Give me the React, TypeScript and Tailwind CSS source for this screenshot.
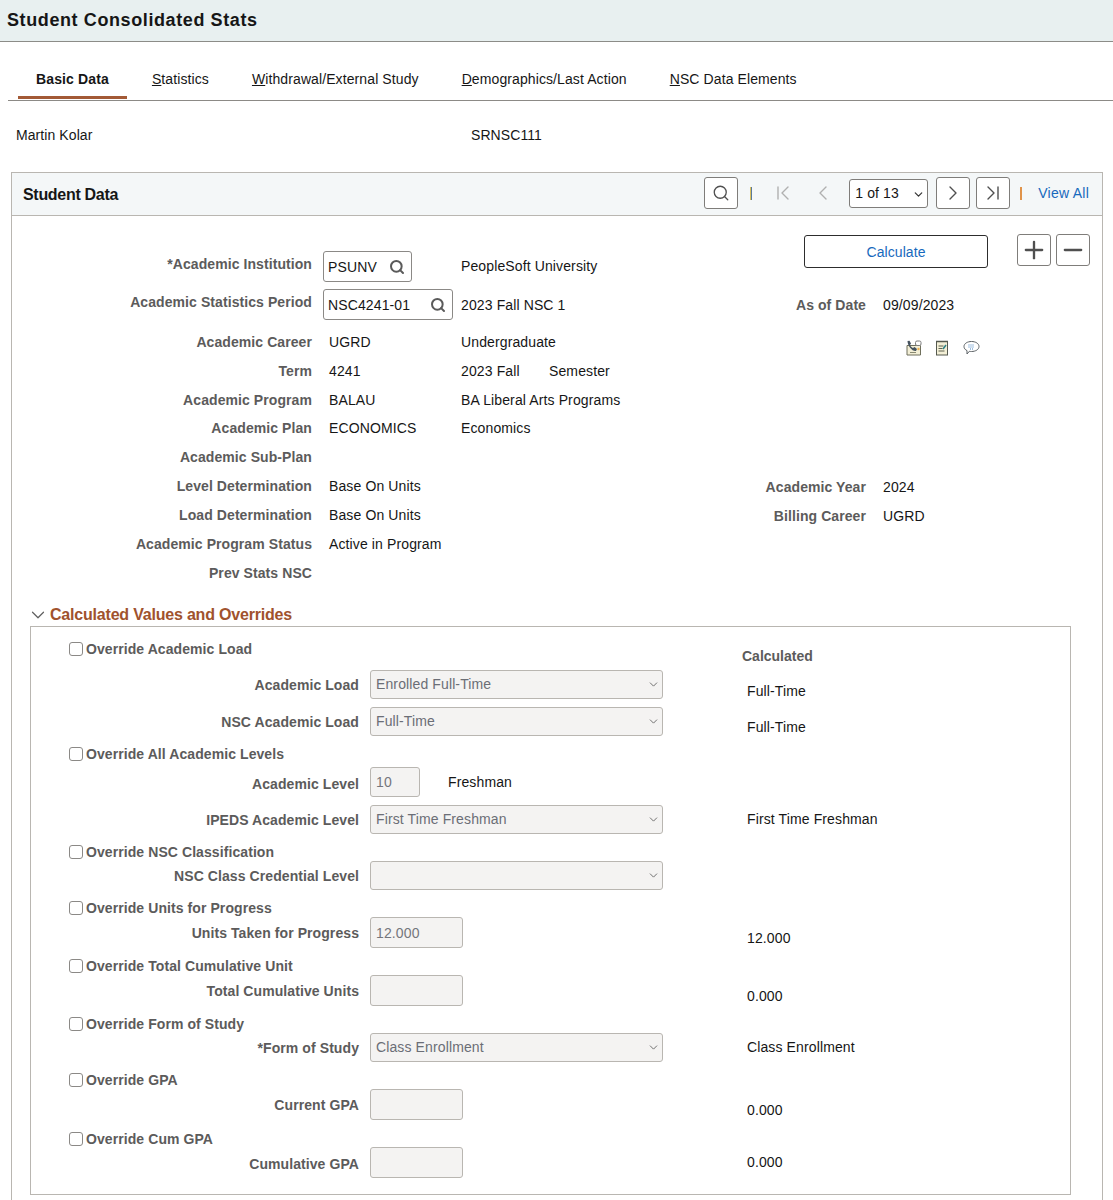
import React from 'react'
import { ChevronDown, ChevronLeft, ChevronRight, ChevronFirst, ChevronLast, Search, Plus, Minus } from 'lucide-react'

const labelCls = 'text-[14px] leading-4 font-bold text-[#5c5b5b] tracking-[0.08px] text-right whitespace-nowrap'
const valueCls = 'text-[14px] leading-4 text-[#161616] tracking-[0.12px]'
const tabCls = 'flex h-[40px] items-center px-[18px] text-[14px] text-[#161616] tracking-[0.1px]'

function NotifyIcon() {
  return (
    <svg width="16" height="16" viewBox="0 0 16 16">
      <path d="M1 5.5h13.5V15H1z" fill="#f3efd6" stroke="#6f6f5c" />
      <path d="M1.5 1 L3.5 .8 L5 3.5 L4 5 C4.6 6.6 5.6 7.4 7 8 L8.6 7 L11 9 L10 11 C6 11.4 1.6 6 1.5 1z" fill="#46535f" />
      <rect x="9.5" y="1" width="5.5" height="4.5" rx="1.5" fill="#fff" stroke="#7d7d7d" />
      <path d="M4 12.5h6" stroke="#8a8a72" />
      <circle cx="12.5" cy="9" r="1.2" fill="#f0b050" />
    </svg>
  )
}

function NotepadIcon() {
  return (
    <svg width="14" height="16" viewBox="0 0 14 16">
      <rect x="1.5" y="1.5" width="11" height="13.5" fill="#f3efd6" stroke="#55594f" />
      <path d="M1.5 1.5h11" stroke="#55594f" strokeWidth="2" strokeDasharray="1 1" />
      <path d="M3.5 6h5M3.5 8.5h4M3.5 11h6" stroke="#5f6350" />
      <path d="M8 9l3-4" stroke="#2f7f86" strokeWidth="1.6" />
    </svg>
  )
}

function ChatIcon() {
  return (
    <svg width="17" height="16" viewBox="0 0 17 16">
      <path d="M8.5 1.5c4 0 7.5 2 7.5 5s-3.500 5-7.500 5c-.8 0-1.500 0-2.200-.2L4 14v-3.400C2 9.700 1 8.200 1 6.500c0-3 3.500-5 7.500-5z" fill="#fff" stroke="#5a6064" />
      <path d="M5.500 5h6M5.500 7h6M7 9h3" stroke="#3f7fc0" strokeDasharray="1 1" />
    </svg>
  )
}

function IconBtn({ children, className }: { children: React.ReactNode; className: string }) {
  return (
    <button className={`flex items-center justify-center rounded-[3px] border border-[#7f7d7a] bg-white text-[#4f4f4f] ${className}`}>
      {children}
    </button>
  )
}

function PromptInput({ value, width }: { value: string; width: string }) {
  return (
    <div className={`flex h-[31px] items-center justify-between rounded-[3px] border border-[#8b8986] pl-1 pr-[6px] ${width}`}>
      <span className="pt-px text-[14px] tracking-[0.12px] text-[#161616]">{value}</span>
      <Search size={16} strokeWidth={3} className="text-[#5a5a5a]" />
    </div>
  )
}

function InfoRow({ label, value, desc, extra, height }: { label: string; value?: string; desc?: React.ReactNode; extra?: React.ReactNode; height: string }) {
  return (
    <div className={`flex items-center ${height}`}>
      <span className={`w-[300px] shrink-0 ${labelCls}`}>{label}</span>
      <span className={`ml-[17px] w-[132px] shrink-0 ${valueCls}`}>{value}</span>
      <span className={`w-[304px] shrink-0 ${valueCls}`}>{desc}</span>
      {extra}
    </div>
  )
}

function RightField({ label, value }: { label: string; value: string }) {
  return (
    <div className="flex items-center pt-[2px]">
      <span className={`w-[101px] shrink-0 ${labelCls}`}>{label}</span>
      <span className={`ml-[17px] ${valueCls}`}>{value}</span>
    </div>
  )
}

function CheckRow({ label, className, children }: { label: string; className: string; children?: React.ReactNode }) {
  return (
    <div className={`flex h-4 items-center ${className}`}>
      <span className="ml-[38px] h-[14px] w-[14px] shrink-0 rounded-[3px] border border-[#8b8986] bg-white" />
      <span className="ml-[3px] w-[656px] shrink-0 text-[14px] leading-4 font-bold text-[#5c5b5b] tracking-[0.08px]">{label}</span>
      {children}
    </div>
  )
}

function DisabledSelect({ value }: { value: string }) {
  return (
    <div className="relative h-[29px] w-[293px]">
      <select disabled value={value} className="h-full w-full appearance-none rounded-[3px] border border-[#b9b6b1] bg-[#f4f3f2] pl-[5px] text-[14px] tracking-[0.12px] text-[#6b6e76] opacity-100">
        <option value={value}>{value}</option>
      </select>
      <ChevronDown size={13} strokeWidth={1.75} className="absolute right-[3px] top-[8px] text-[#6a6a6a]" />
    </div>
  )
}

function DisabledInput({ value, width, height }: { value?: string; width: string; height: string }) {
  return (
    <div className={`flex items-center rounded-[3px] border border-[#b9b6b1] bg-[#f4f3f2] pl-[5px] text-[14px] tracking-[0.12px] text-[#74767c] ${width} ${height}`}>
      {value}
    </div>
  )
}

function FieldRow({ label, control, value, className, valueCls: vc = '', labelOffset = '' }: { label: string; control: React.ReactNode; value?: string; className: string; valueCls?: string; labelOffset?: string }) {
  return (
    <div className={`flex items-center ${className}`}>
      <span className={`w-[328px] shrink-0 ${labelCls} ${labelOffset}`}>{label}</span>
      <div className="ml-[11px] w-[377px] shrink-0">{control}</div>
      {value && <span className={`${valueCls} ${vc}`}>{value}</span>}
    </div>
  )
}

export default function App() {
  return (
    <div className="h-[1200px] overflow-hidden bg-white font-['Liberation_Sans',Arial,sans-serif]">
      <div className="flex h-[42px] items-center border-b border-[#8c8c88] bg-[#e8f0f0] pb-px pl-[7px]">
        <h1 className="text-[18px] font-bold text-[#161616] tracking-[0.6px]">Student Consolidated Stats</h1>
      </div>

      <div className="ml-2 mt-[17px] flex h-[42px] gap-[7px] border-b border-[#8c8a86] pl-[10px]">
        <div className="flex h-[40px] items-center border-b-[3px] border-[#a35a36] px-[18px] pt-[3px] text-[14px] font-bold tracking-[0.13px] text-[#161616]">Basic Data</div>
        <div className={tabCls}><span><u>S</u>tatistics</span></div>
        <div className={tabCls}><span><u>W</u>ithdrawal/External Study</span></div>
        <div className={tabCls}><span><u>D</u>emographics/Last Action</span></div>
        <div className={tabCls}><span><u>N</u>SC Data Elements</span></div>
      </div>

      <div className="flex h-[71px] items-center pb-[3px] pl-4 text-[14px] tracking-[0.08px] text-[#161616]">
        <span className="w-[455px]">Martin Kolar</span>
        <span>SRNSC111</span>
      </div>

      <div className="ml-[11px] w-[1092px] border border-[#b9b6b1]">
        <div className="flex h-[43px] items-center border-b border-[#b9b6b1] bg-[#f4f7f8] pl-[11px] pr-[13px]">
          <h2 className="pt-[2px] text-[16px] font-bold tracking-[-0.3px] text-[#161616]">Student Data</h2>
          <div className="ml-auto flex items-center pb-[2px]">
            <IconBtn className="h-[32px] w-[34px]"><Search size={18} strokeWidth={1.75} /></IconBtn>
            <span className="ml-[12px] h-[13px] w-[2px] border-l border-r border-l-[#d8c060] border-r-[#5a7a9a]" />
            <ChevronFirst size={24} strokeWidth={1.4} className="ml-[19px] text-[#b0b0b0]" />
            <ChevronLeft size={24} strokeWidth={1.4} className="ml-[16px] text-[#b0b0b0]" />
            <div className="relative ml-[14px] h-[29px] w-[79px]">
              <select value="1 of 13" onChange={() => {}} className="h-full w-full appearance-none rounded-[3px] border border-[#7f7d7a] bg-white pl-[5px] text-[14px] tracking-[0.12px] text-[#161616]">
                <option>1 of 13</option>
              </select>
              <ChevronDown size={13} strokeWidth={2.25} className="absolute right-[3px] top-[9px] text-[#333]" />
            </div>
            <IconBtn className="ml-2 h-[32px] w-[34px]"><ChevronRight size={24} strokeWidth={1.4} /></IconBtn>
            <IconBtn className="ml-[6px] h-[32px] w-[34px]"><ChevronLast size={24} strokeWidth={1.4} /></IconBtn>
            <span className="ml-[10px] h-[13px] w-[2px] bg-[#e0934a]" />
            <a className="ml-[16px] text-[14px] tracking-[0.25px] text-[#1769bd]">View All</a>
          </div>
        </div>

        <div className="pt-[18px]">
          <div className="flex h-[55px]">
            <span className={`mt-[22px] w-[300px] shrink-0 ${labelCls}`}>*Academic Institution</span>
            <div className="ml-[11px] mt-[17px] w-[138px] shrink-0"><PromptInput value="PSUNV" width="w-[89px]" /></div>
            <span className={`mt-[24px] w-[343px] shrink-0 ${valueCls}`}>PeopleSoft University</span>
            <button className="mt-px h-[33px] w-[184px] rounded-[3px] border border-[#2d2d2d] bg-white pt-px text-[14px] tracking-[0.08px] text-[#1769bd]">Calculate</button>
            <IconBtn className="ml-[29px] h-[32px] w-[34px]"><Plus size={28} strokeWidth={2} /></IconBtn>
            <IconBtn className="ml-[5px] h-[32px] w-[34px]"><Minus size={28} strokeWidth={2} /></IconBtn>
          </div>
          <div className="flex h-[38px]">
            <span className={`mt-[5px] w-[300px] shrink-0 ${labelCls}`}>Academic Statistics Period</span>
            <div className="ml-[11px] w-[138px] shrink-0"><PromptInput value="NSC4241-01" width="w-[130px]" /></div>
            <span className={`mt-2 w-[304px] shrink-0 ${valueCls}`}>2023 Fall NSC 1</span>
            <span className={`mt-2 w-[101px] shrink-0 ${labelCls}`}>As of Date</span>
            <span className={`ml-[17px] mt-2 ${valueCls}`}>09/09/2023</span>
          </div>
          <InfoRow height="h-[29px]" label="Academic Career" value="UGRD" desc="Undergraduate"
            extra={<div className="ml-[141px] mt-[12px] flex items-center gap-[13px]"><NotifyIcon /><NotepadIcon /><span className="ml-px"><ChatIcon /></span></div>} />
          <InfoRow height="h-[29px]" label="Term" value="4241"
            desc={<span className="flex"><span className="w-[88px]">2023 Fall</span><span>Semester</span></span>} />
          <InfoRow height="h-[29px]" label="Academic Program" value="BALAU" desc="BA Liberal Arts Programs" />
          <InfoRow height="h-[28px]" label="Academic Plan" value="ECONOMICS" desc="Economics" />
          <InfoRow height="h-[29px]" label="Academic Sub-Plan" />
          <InfoRow height="h-[29px]" label="Level Determination" value="Base On Units" extra={<RightField label="Academic Year" value="2024" />} />
          <InfoRow height="h-[29px]" label="Load Determination" value="Base On Units" extra={<RightField label="Billing Career" value="UGRD" />} />
          <InfoRow height="h-[29px]" label="Academic Program Status" value="Active in Program" />
          <InfoRow height="h-[29px]" label="Prev Stats NSC" />

          <div className="mt-[17px] flex h-[22px] items-center pl-[15px]">
            <ChevronDown size={22} strokeWidth={1.3} className="text-[#5f5f5f]" />
            <span className="ml-px text-[16px] font-bold tracking-[-0.2px] text-[#a0522d]">Calculated Values and Overrides</span>
          </div>

          <div className="ml-[18px] w-[1041px] border border-[#b9b6b1] pb-[16px] pt-[14px]">
            <CheckRow label="Override Academic Load" className="">
              <span className="mt-[14px] text-[14px] leading-4 font-bold text-[#5c5b5b]">Calculated</span>
            </CheckRow>
            <FieldRow className="mt-[13px]" label="Academic Load" control={<DisabledSelect value="Enrolled Full-Time" />} value="Full-Time" valueCls="mt-[12px]" />
            <FieldRow className="mt-2" label="NSC Academic Load" control={<DisabledSelect value="Full-Time" />} value="Full-Time" valueCls="mt-[10px]" />
            <CheckRow label="Override All Academic Levels" className="mt-[10px]" />
            <FieldRow className="mt-[5px]" labelOffset="mt-[4px]" label="Academic Level" control={
              <div className="flex items-center">
                <DisabledInput value="10" width="w-[50px]" height="h-[30px]" />
                <span className={`ml-[28px] ${valueCls}`}>Freshman</span>
              </div>
            } />
            <FieldRow className="mt-2" label="IPEDS Academic Level" control={<DisabledSelect value="First Time Freshman" />} value="First Time Freshman" valueCls="mb-[2px]" />
            <CheckRow label="Override NSC Classification" className="mt-[10px]" />
            <FieldRow className="mt-px" label="NSC Class Credential Level" control={<DisabledSelect value="" />} />
            <CheckRow label="Override Units for Progress" className="mt-[10px]" />
            <FieldRow className="mt-px" label="Units Taken for Progress" control={<DisabledInput value="12.000" width="w-[93px]" height="h-[31px] pt-px" />} value="12.000" valueCls="mt-[10px]" />
            <CheckRow label="Override Total Cumulative Unit" className="mt-[10px]" />
            <FieldRow className="mt-px" label="Total Cumulative Units" control={<DisabledInput width="w-[93px]" height="h-[31px]" />} value="0.000" valueCls="mt-[10px]" />
            <CheckRow label="Override Form of Study" className="mt-[10px]" />
            <FieldRow className="mt-px" label="*Form of Study" control={<DisabledSelect value="Class Enrollment" />} value="Class Enrollment" valueCls="mb-[2px]" />
            <CheckRow label="Override GPA" className="mt-[10px]" />
            <FieldRow className="mt-px" label="Current GPA" control={<DisabledInput width="w-[93px]" height="h-[31px]" />} value="0.000" valueCls="mt-[10px]" />
            <CheckRow label="Override Cum GPA" className="mt-[11px]" />
            <FieldRow label="Cumulative GPA" labelOffset="mt-[2px]" className="" control={<DisabledInput width="w-[93px]" height="h-[31px]" />} value="0.000" valueCls="mb-[2px]" />
          </div>
          <div className="h-[60px]" />
        </div>
      </div>
    </div>
  )
}
